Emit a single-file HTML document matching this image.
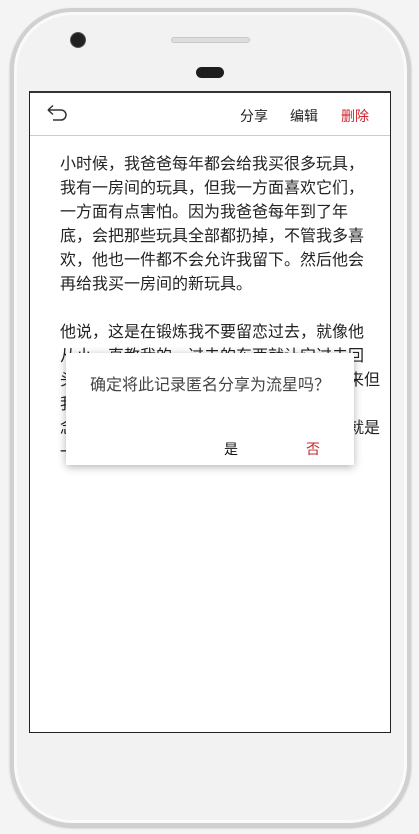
<!DOCTYPE html>
<html><head><meta charset="utf-8"><style>
*{margin:0;padding:0;box-sizing:border-box}
body{width:419px;height:834px;background:#f4f4f4;position:relative;overflow:hidden;font-family:"Liberation Sans","Noto Sans CJK SC",sans-serif}
.phone{position:absolute;left:10px;top:8px;width:401px;height:819px;border-radius:62px;background:#f2f2f2;border:4px solid #d0d0d0;box-shadow:inset 0 0 0 3px #fafafa, 0 1px 2px #bbb}
.cam{position:absolute;left:71px;top:33px;width:14px;height:14px;border-radius:50%;background:#222;box-shadow:0 0 0 1px #555}
.spk{position:absolute;left:171px;top:37px;width:79px;height:6px;border-radius:3px;background:#ddd;border:1px solid #c8c8c8}
.sens{position:absolute;left:196px;top:67px;width:28px;height:11px;border-radius:6px;background:#1e1e1e}
.screen{position:absolute;left:29px;top:91px;width:362px;height:642px;background:#fff;border:1px solid #222;border-top:2px solid #333}
.hdr{position:absolute;left:0;top:0;width:100%;height:43px;border-bottom:1px solid #ccc}
.hdr span{position:absolute;top:13px;font-size:14px;color:#222}
.txt{position:absolute;left:30px;top:60px;font-size:16px;line-height:24px;color:#222;white-space:nowrap}
.dlg{position:absolute;left:66px;top:353px;width:288px;height:112px;background:#fff;box-shadow:0 2px 8px rgba(0,0,0,.3)}
.dlg .t{position:absolute;left:24px;top:18px;font-size:16px;color:#444}
.dlg .y{position:absolute;left:158px;top:86px;font-size:14px;color:#111}
.dlg .n{position:absolute;left:240px;top:86px;font-size:14px;color:#c0282e}
</style></head><body>
<div class="phone"></div>
<div class="cam"></div><div class="spk"></div><div class="sens"></div>
<div class="screen">
 <div class="hdr">
  <svg style="position:absolute;left:16px;top:11px" width="24" height="20" viewBox="0 0 24 20"><path d="M2 6 L7 1.5 M2 6 L7 10.5 M2 6 H15 a5 5 0 0 1 0 10 H7" fill="none" stroke="#333" stroke-width="1.5"/></svg>
  <span style="left:210px">分享</span><span style="left:260px">编辑</span><span style="left:311px;color:#d2232a">删除</span>
 </div>
 <div class="txt">小时候，我爸爸每年都会给我买很多玩具，<br>我有一房间的玩具，但我一方面喜欢它们，<br>一方面有点害怕。因为我爸爸每年到了年<br>底，会把那些玩具全部都扔掉，不管我多喜<br>欢，他也一件都不会允许我留下。然后他会<br>再给我买一房间的新玩具。<br><br>他说，这是在锻炼我不要留恋过去，就像他<br>从小一直教我的，过去的东西就让它过去回<br>头看没有意义，我那时候不太懂，但是后来但<br>我慢慢明白了他说的话，有些东西真的不<br>念念不忘，只会让自己更加痛苦，我想这就是<br>一种成长吧。</div>
</div>
<div class="dlg"><div class="t">确定将此记录匿名分享为流星吗？</div><div class="y">是</div><div class="n">否</div></div>
</body></html>
